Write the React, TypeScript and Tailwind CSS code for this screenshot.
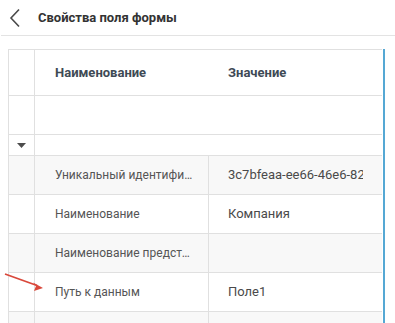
import React from "react";

const rows = [
  { label: "Уникальный идентификатор", value: "3c7bfeaa-ee66-46e6-82a1-5d0c1f4e9b27", gray: true },
  { label: "Наименование", value: "Компания", gray: false },
  { label: "Наименование представления", value: "", gray: true },
  { label: "Путь к данным", value: "Поле1", gray: false },
  { label: "", value: "", gray: true },
];

export default function App() {
  return (
    <div
      className="relative w-[395px] h-[323px] overflow-hidden bg-white"
      style={{ fontFamily: "Roboto, 'Liberation Sans', sans-serif" }}
    >
      <div className="h-[36px] ml-px flex items-center border-b border-[#e3e3e3]">
        <svg width="14" height="20" viewBox="0 0 14 20" className="ml-[7px]">
          <polyline points="11,1.5 3,10 11,18.5" fill="none" stroke="#4a4a4a" strokeWidth="1.6" />
        </svg>
        <div className="ml-[16px] text-[13px] font-bold text-[#333333] leading-none">Свойства поля формы</div>
      </div>

      <div className="ml-[8px] mt-[13px] flex w-[377px]">
        <div className="w-[374px] border-l border-t border-[#e0e0e0]">
          <div className="flex h-[46px] border-b border-[#e0e0e0]">
            <div className="w-[26px] border-r border-[#e0e0e0]" />
            <div className="w-[174px] pl-[20px] flex items-center text-[13px] font-bold text-[#3e4a55]">
              Наименование
            </div>
            <div className="flex-1 pl-[19px] flex items-center text-[13px] font-bold text-[#3e4a55]">
              Значение
            </div>
          </div>
          <div className="flex h-[39px] border-b border-[#e0e0e0]">
            <div className="w-[26px] border-r border-[#e0e0e0]" />
          </div>
          <div className="flex h-[21px] border-b border-[#e0e0e0]">
            <div className="w-[26px] border-r border-[#e0e0e0] flex items-center justify-center pr-[1px]">
              <svg width="9" height="5" viewBox="0 0 9 5">
                <polygon points="0,0 9,0 4.5,5" fill="#4d4d4d" />
              </svg>
            </div>
          </div>
          {rows.map((r, i) => (
            <div
              key={i}
              className={`flex h-[39px] border-b border-[#e0e0e0] ${r.gray ? "bg-[#f8f8f8]" : "bg-white"}`}
            >
              <div className="w-[26px] border-r border-[#e0e0e0]" />
              <div className="w-[174px] border-r border-[#e0e0e0] pl-[20px] pr-[14px] flex items-center min-w-0">
                <span className="block truncate text-[12px] text-[#555555]">{r.label}</span>
              </div>
              <div className="flex-1 pl-[19px] pr-[19px] flex items-center min-w-0 overflow-hidden">
                <span className="block overflow-hidden whitespace-nowrap text-[13px] text-[#4a4a4a]">{r.value}</span>
              </div>
            </div>
          ))}
        </div>
        <div className="w-[2px] ml-px bg-[#55a8d4]" />
      </div>

      <svg className="absolute left-0 top-[265px]" width="50" height="30" viewBox="0 265 50 30">
        <line x1="5" y1="274" x2="37" y2="285.5" stroke="#d9483b" strokeWidth="1.8" />
        <polygon points="43,288 33,282.5 36,286 34,291" fill="#d9483b" />
      </svg>
    </div>
  );
}
